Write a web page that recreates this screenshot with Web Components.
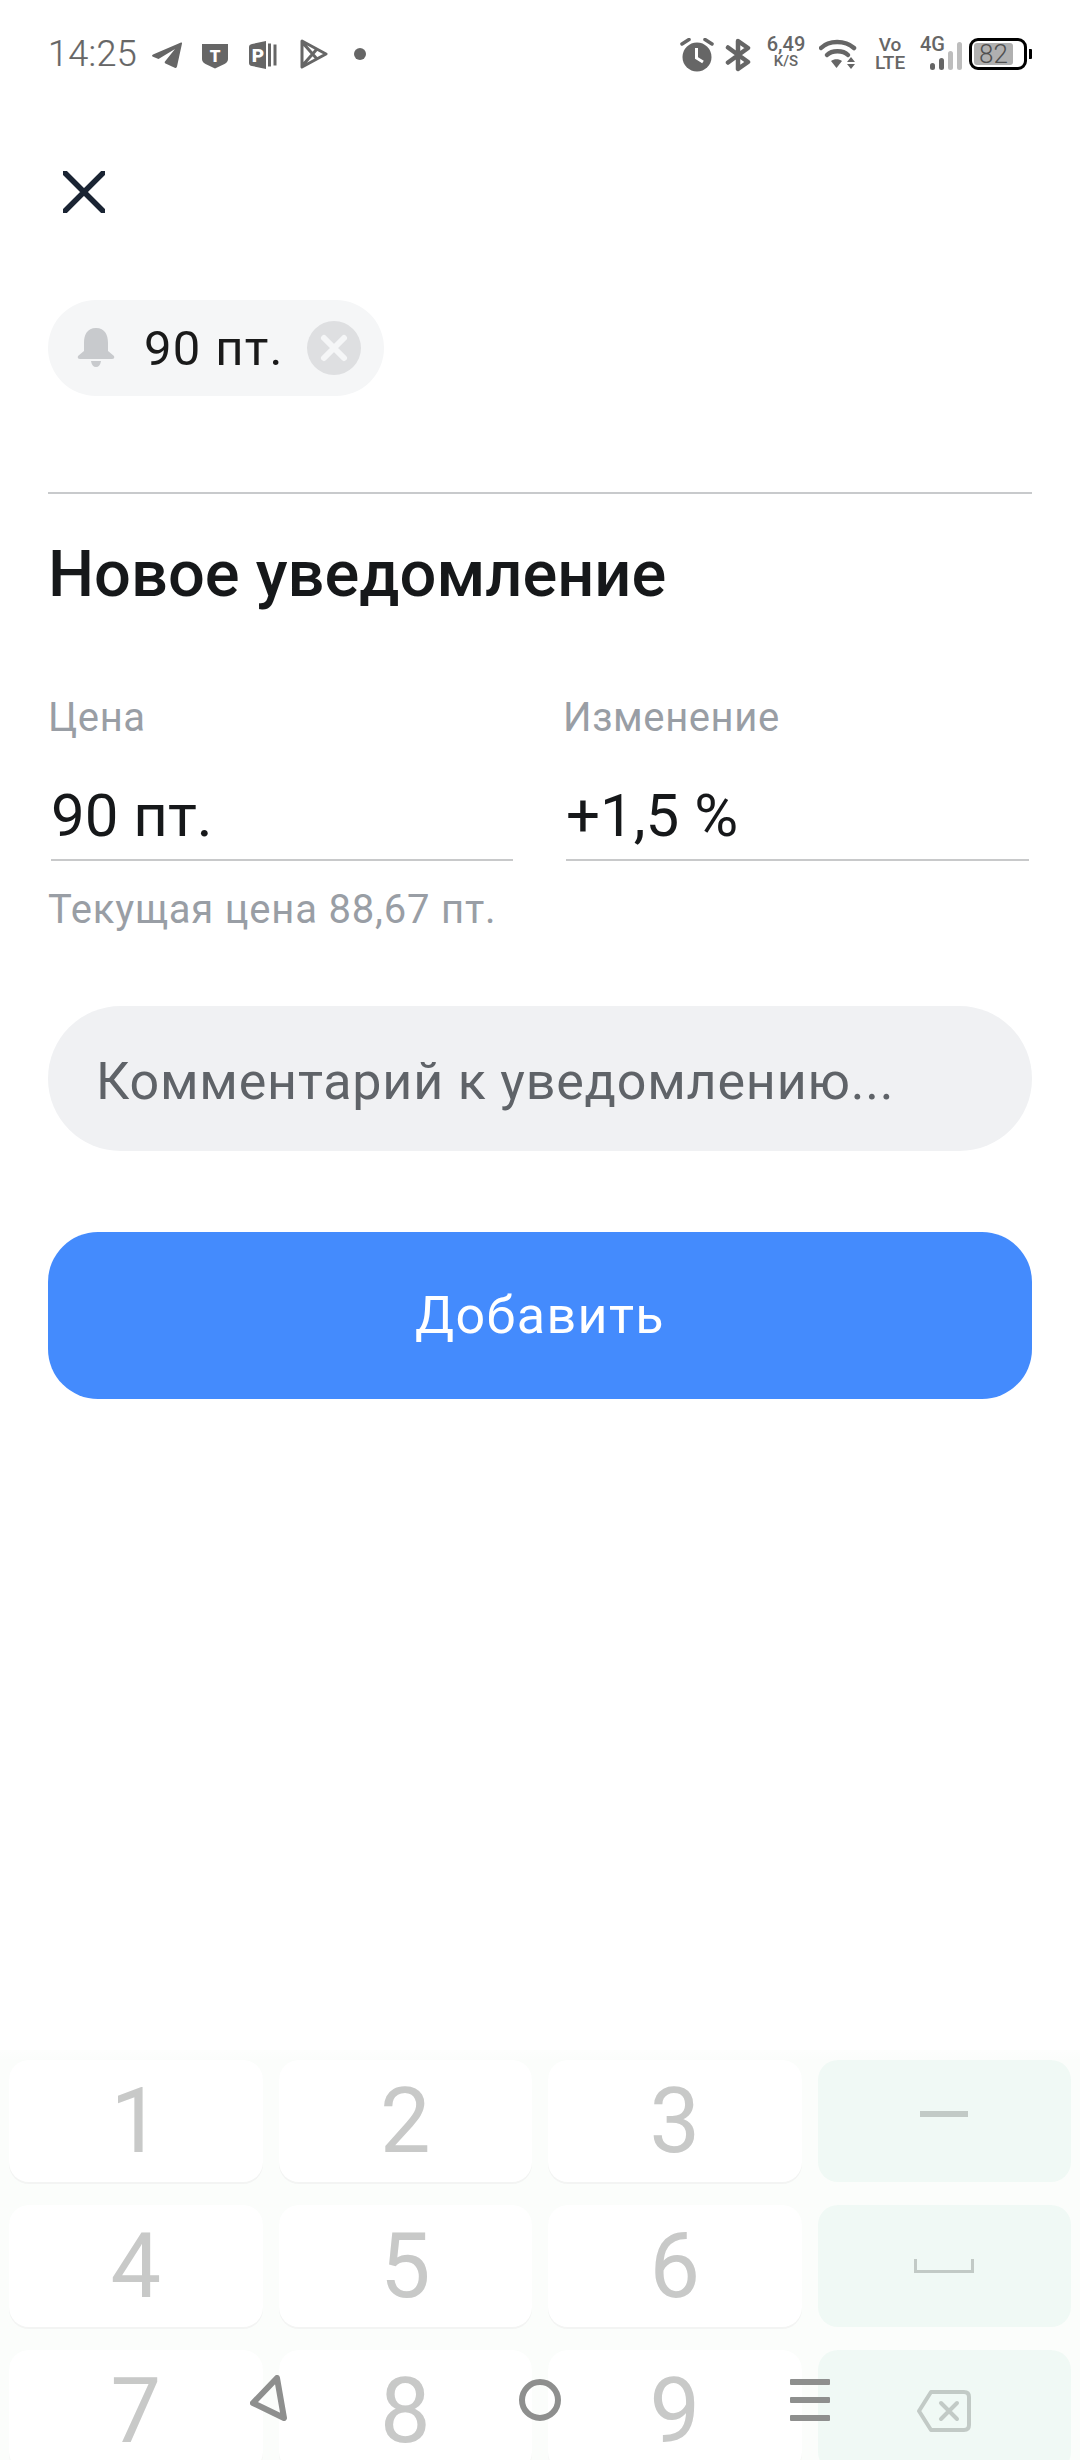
<!DOCTYPE html>
<html lang="ru">
<head>
<meta charset="utf-8">
<title>Новое уведомление</title>
<style>
    html, body { margin: 0; padding: 0; background: #fff; }
    body { width: 1080px; height: 2460px; display: flex; flex-direction: column; overflow: hidden; font-family: Roboto, "Noto Sans", sans-serif; }
</style>
</head>
<body>
<status-bar></status-bar>
<alert-form>
    <alert-chip>90 пт.</alert-chip>
    <form-title>Новое уведомление</form-title>
</alert-form>
<num-pad></num-pad>

<script>
class StatusBar extends HTMLElement {
    constructor() {
        super();
        this.attachShadow({ mode: 'open' });
        this.shadowRoot.innerHTML = `
            <style>
                :host { display: flex; height: 108px; flex: none; padding: 0 48px; align-items: flex-start; color: #666; font-family: Roboto, sans-serif; }
                svg { display: block; flex: none; }
                .time { font-size: 36px; line-height: 108px; height: 108px; font-weight: 300; width: 104px; letter-spacing: .3px; -webkit-text-stroke: .2px #666; }
                .left { display: flex; align-items: flex-start; }
                .right { display: flex; align-items: flex-start; margin-left: auto; }
                .stack { display: flex; flex-direction: column; align-items: center; font-weight: 500; }
                .speed { margin: 36px 0 0 15px; width: 40px; }
                .speed b { font-weight: 500; font-size: 20px; line-height: 17px; }
                .speed i { font-style: normal; font-size: 15px; line-height: 17px; }
                .volte { margin: 36px 0 0 18px; width: 30px; font-size: 19px; line-height: 18px; }
                .fourg { position: relative; margin-left: 15px; width: 42px; height: 108px; }
                .fourg span { position: absolute; left: 0; top: 36px; font-size: 20px; line-height: 17px; font-weight: 500; }
                .fourg svg { position: absolute; left: 0; top: 0; }
                .battery { position: relative; width: 58px; height: 32px; margin: 38px 0 0 7px; box-sizing: border-box; border: 3px solid #000; border-radius: 9px; }
                .battery div { position: absolute; left: 2px; top: 2px; width: 39px; height: 22px; background: #b0b0b0; border-radius: 3px; font-size: 26px; line-height: 23px; text-align: center; color: #4f4f4f; font-weight: 300; }
                .tip { width: 3px; height: 10px; background: #000; margin: 49px 0 0 2px; border-radius: 0 1px 1px 0; }
            </style>
            <div class="left">
                <div class="time">14:25</div>
                <svg width="30" height="27" viewBox="0 0 30 27" style="margin-top:42px"><path fill="#666" d="M1 12.500 29 .5q1.300-.3 1 1L25 24.500q-.4 2-2.300 1.200L13.500 21.500q-1.500-1-.3-2.300L23 7 6.500 17 1 14.800q-2-1 0-2.300Z"/></svg>
                <svg width="26" height="25" viewBox="0 0 26 25" style="margin:44px 0 0 20px"><path fill="#666" d="M0 0H26V15Q26 18 22.500 20L13 24.500 3.500 20Q0 18 0 15Z"/><text x="13" y="18" text-anchor="middle" font-family="Roboto" font-weight="900" font-size="17" fill="#fff">T</text></svg>
                <svg width="28" height="28" viewBox="0 0 28 28" style="margin:41px 0 0 21px"><path fill="#666" d="M3 3 17 0V28L3 25Q0 24.500 0 22V6Q0 3.500 3 3ZM19 2.500H22V25.500H19ZM24.500 3.500H27.500V24.500H24.500Z"/><text x="9" y="21" text-anchor="middle" font-family="Roboto" font-weight="900" font-size="19" fill="#fff">P</text></svg>
                <svg width="28" height="30" viewBox="0 0 28 30" style="margin:39px 0 0 23px"><path fill="none" stroke="#666" stroke-width="3" stroke-linejoin="round" d="M2 2 26 15 2 28ZM2 3 17 20M2 27 17 10"/></svg>
                <svg width="12" height="12" viewBox="0 0 12 12" style="margin:48px 0 0 26px"><circle cx="6" cy="6" r="6" fill="#666"/></svg>
            </div>
            <div class="right">
                <svg width="34" height="34" viewBox="0 0 34 34" style="margin-top:38px"><circle cx="17" cy="19" r="14.500" fill="#666"/><path d="M2 6 9 1.500M25 1.500 32 6" stroke="#666" stroke-width="3.500" stroke-linecap="round"/><path d="M16.500 10V20L23 24" fill="none" stroke="#fff" stroke-width="3"/></svg>
                <svg width="26" height="34" viewBox="0 0 26 34" style="margin:38px 0 0 11px"><path fill="none" stroke="#666" stroke-width="4.500" stroke-linecap="round" stroke-linejoin="round" d="M3 9.500 23 24 13 31V3L23 10 3 24.500"/></svg>
                <div class="stack speed"><b>6,49</b><i>K/S</i></div>
                <svg width="38" height="32" viewBox="0 0 38 32" style="margin:39px 0 0 13px"><g fill="none" stroke="#666" stroke-width="4.500" stroke-linecap="round"><path d="M2 9C10 1 26 1 35 9"/><path d="M8 16C13 11 24 11 29 16"/></g><path fill="#666" d="M12 22C15 19.500 20 19.500 23 22L17.500 29Z"/><path fill="#666" d="M32 18 36 23H28ZM28 25H36L32 30Z"/></svg>
                <div class="stack volte"><span>Vo</span><span>LTE</span></div>
                <div class="fourg"><span>4G</span><svg width="42" height="108" viewBox="0 0 42 108"><g fill="#666"><rect x="10" y="63" width="5" height="7" rx="2.500"/><rect x="19" y="58" width="5" height="12" rx="2.500"/></g><g fill="#bdbdbd"><rect x="28" y="51" width="5" height="19" rx="2.500"/><rect x="37" y="42" width="5" height="28" rx="2.500"/></g></svg></div>
                <div class="battery"><div>82</div></div>
                <div class="tip"></div>
            </div>
        `;
    }
}

class AlertChip extends HTMLElement {
    constructor() {
        super();
        this.attachShadow({ mode: 'open' });
        this.shadowRoot.innerHTML = `
            <style>
                :host { display: inline-flex; box-sizing: border-box; align-items: center; height: 96px; width: 336px; border-radius: 48px; background: #f5f6f7; padding: 0 23px 0 29px; color: #1a1a1a; font-size: 49px; letter-spacing: 1.300px; }
                svg { display: block; flex: none; }
                .label { margin-left: 29px; flex: 1; white-space: nowrap; }
            </style>
            <svg width="38" height="40" viewBox="0 0 38 40"><path fill="#c8cacd" d="M19 0C28 0 31 7 31 15V23L37 28Q38 31 35 31H3Q0 31 1 28L7 23V15C7 7 10 0 19 0Z"/><path fill="#c8cacd" d="M14 33H24Q23 39 19 39T14 33Z"/></svg>
            <span class="label"><slot></slot></span>
            <svg width="54" height="54" viewBox="0 0 54 54"><circle cx="27" cy="27" r="27" fill="#dedfe1"/><path d="M17 17 37 37M37 17 17 37" stroke="#f5f6f7" stroke-width="6" stroke-linecap="round"/></svg>
        `;
    }
}

class FormTitle extends HTMLElement {
    constructor() {
        super();
        this.attachShadow({ mode: 'open' });
        this.shadowRoot.innerHTML = `
            <style>
                :host { display: block; margin-top: 96px; padding-top: 40px; border-top: 2px solid #c8cacc; font-size: 65px; line-height: 80px; font-weight: 500; color: #16181a; white-space: nowrap; }
            </style>
            <slot></slot>
        `;
    }
}

class PriceField extends HTMLElement {
    constructor() {
        super();
        this.attachShadow({ mode: 'open' });
        this.shadowRoot.innerHTML = `
            <style>
                :host { display: block; min-width: 0; }
                .label { font-size: 40px; line-height: 50px; color: #999ea5; letter-spacing: .6px; }
                .value { margin: 33px 3px 0; padding: 0 0 3px 0; font-size: 60px; line-height: 80px; color: #16181a; border-bottom: 2px solid #c8c9ca; }
                .hint { margin-top: 24px; font-size: 40px; line-height: 50px; color: #999ea5; white-space: nowrap; letter-spacing: .8px; }
                .hint:empty { display: none; }
            </style>
            <div class="label"></div>
            <div class="value"></div>
            <div class="hint"></div>
        `;
    }

    connectedCallback() {
        this.shadowRoot.querySelector('.label').textContent = this.getAttribute('label');
        this.shadowRoot.querySelector('.value').textContent = this.getAttribute('value');
        this.shadowRoot.querySelector('.hint').textContent = this.getAttribute('hint') || '';
    }
}

class AlertForm extends HTMLElement {
    constructor() {
        super();
        this.attachShadow({ mode: 'open' });
        this.shadowRoot.innerHTML = `
            <style>
                :host { display: block; flex: 1; min-height: 0; padding: 0 48px; font-family: Roboto, sans-serif; }
                .close { display: block; margin: 63px 0 87px 15px; }
                .fields { display: grid; grid-template-columns: 468px 469px; column-gap: 47px; margin-top: 79px; }
                .comment { margin-top: 71px; height: 145px; border-radius: 73px; background: #f0f1f3; padding-left: 48px; font-size: 52px; line-height: 151px; letter-spacing: .8px; color: #5f6368; }
                .add { margin-top: 81px; height: 167px; border-radius: 50px; background: #448bfd; color: #fff; font-size: 52px; letter-spacing: 1.400px; line-height: 167px; text-align: center; }
            </style>
            <svg class="close" width="42" height="42" viewBox="0 0 42 42"><path d="M2 2 40 40M40 2 2 40" stroke="#1a2433" stroke-width="5.500" stroke-linecap="square"/></svg>
            <slot></slot>
            <div class="fields">
                <price-field label="Цена" value="90 пт." hint="Текущая цена 88,67 пт."></price-field>
                <price-field label="Изменение" value="+1,5 %"></price-field>
            </div>
            <div class="comment">Комментарий к уведомлению...</div>
            <div class="add">Добавить</div>
        `;
    }
}

class NumKey extends HTMLElement {
    constructor() {
        super();
        this.attachShadow({ mode: 'open' });
        this.shadowRoot.innerHTML = `
            <style>
                :host { display: flex; align-items: center; justify-content: center; height: 122px; border-radius: 20px; background: #fff; box-shadow: 0 2px 0 #f3f4f3; font-size: 90px; color: #c8c9c8; }
                :host([fn]) { background: #f0f9f5; box-shadow: none; }
            </style>
            <slot></slot>
        `;
    }
}

class NumPad extends HTMLElement {
    constructor() {
        super();
        this.attachShadow({ mode: 'open' });
        this.shadowRoot.innerHTML = `
            <style>
                :host { display: block; position: relative; flex: none; height: 410px; overflow: hidden; background: linear-gradient(#fdfefd, #fbfdfb 10px); font-family: Roboto, sans-serif; }
                .keys { display: grid; grid-template-columns: repeat(4, 1fr); grid-auto-rows: 122px; gap: 23px 16px; padding: 10px 9px 0; }
                .minus { width: 48px; height: 6px; margin-bottom: 14px; background: #c2cac6; }
                svg { display: block; }
                .nav { position: absolute; left: 0; right: 0; top: 325px; display: flex; justify-content: center; gap: 230px; }
            </style>
            <div class="keys">
                <num-key>1</num-key><num-key>2</num-key><num-key>3</num-key>
                <num-key fn><div class="minus"></div></num-key>
                <num-key>4</num-key><num-key>5</num-key><num-key>6</num-key>
                <num-key fn><svg width="60" height="14" viewBox="0 0 60 14"><path d="M1.500 0V12.500H58.500V0" fill="none" stroke="#c2cac6" stroke-width="3"/></svg></num-key>
                <num-key>7</num-key><num-key>8</num-key><num-key>9</num-key>
                <num-key fn><svg width="54" height="42" viewBox="0 0 54 42"><path d="M14 2H47Q52 2 52 7V35Q52 40 47 40H14L2 21Z" fill="none" stroke="#c2cac6" stroke-width="4" stroke-linejoin="round"/><path d="M24 13 40 29M40 13 24 29" stroke="#c2cac6" stroke-width="4" stroke-linecap="round"/></svg></num-key>
            </div>
            <div class="nav">
                <svg width="40" height="46" viewBox="0 0 40 46"><path d="M27 3 3 28 34 43Z" fill="none" stroke="#8e8f8e" stroke-width="6" stroke-linejoin="round"/></svg>
                <svg width="40" height="46" viewBox="0 0 40 46" style="overflow:visible"><circle cx="20" cy="25" r="18" fill="none" stroke="#8e8f8e" stroke-width="6"/></svg>
                <svg width="40" height="46" viewBox="0 0 40 46"><g fill="#8e8f8e"><rect y="4" width="40" height="6" rx="1"/><rect y="22" width="40" height="6" rx="1"/><rect y="40" width="40" height="6" rx="1"/></g></svg>
            </div>
        `;
    }
}

customElements.define('status-bar', StatusBar);
customElements.define('alert-chip', AlertChip);
customElements.define('form-title', FormTitle);
customElements.define('price-field', PriceField);
customElements.define('alert-form', AlertForm);
customElements.define('num-key', NumKey);
customElements.define('num-pad', NumPad);
</script>
</body>
</html>
